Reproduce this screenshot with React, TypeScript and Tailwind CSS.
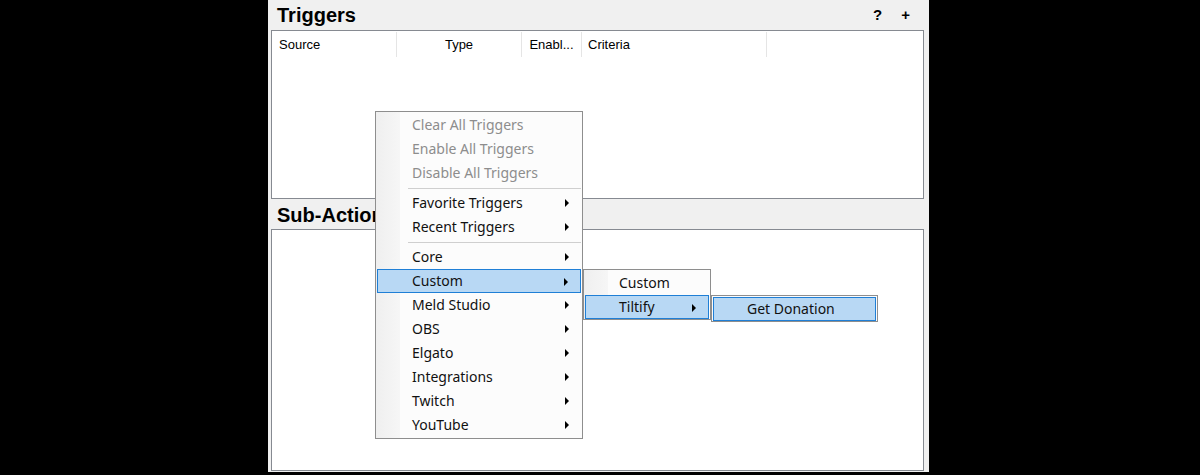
import type { ReactNode } from "react";

const UI = { fontFamily: '"Liberation Sans", Arial, sans-serif' };
const MENU = { fontFamily: '"Noto Sans", "Open Sans", sans-serif' };

function Arrow() {
  return (
    <svg width="5" height="8" viewBox="0 0 5 8" className="absolute right-[11px] top-[8px]">
      <path d="M0 0 L4 4 L0 8 Z" fill="#000" />
    </svg>
  );
}

function Item({
  label,
  disabled,
  sub,
  active,
  tight,
}: {
  label: string;
  disabled?: boolean;
  sub?: boolean;
  active?: boolean;
  tight?: boolean;
}) {
  const pad = active
    ? tight
      ? "border border-[#1f7fd6] bg-[#b8d8f4] pl-[33px]"
      : "border border-[#1f7fd6] bg-[#b8d8f4] pl-[34px]"
    : tight
      ? "pl-[34px]"
      : "pl-[35px]";
  return (
    <div
      className={`relative mx-[1px] flex h-[24px] items-center pb-[2px] text-[14px] ${pad} ${
        disabled ? "text-[#8d8d8d]" : "text-[#111]"
      }`}
    >
      {label}
      {sub && <Arrow />}
    </div>
  );
}

function Sep() {
  return (
    <div className="flex h-[6px] items-center pl-[32px] pr-[1px]">
      <div className="h-px w-full bg-[#cfcfcf]" />
    </div>
  );
}

function Menu({
  className,
  children,
  gutter = true,
}: {
  className: string;
  children: ReactNode;
  gutter?: boolean;
}) {
  return (
    <div
      className={`absolute border border-[#8e8e8e] bg-[#fcfcfc] py-[1px] ${className}`}
      style={MENU}
    >
      {gutter && (
        <div className="absolute bottom-0 left-0 top-0 w-[24px] bg-gradient-to-r from-[#efefef] to-[#f6f6f6]" />
      )}
      <div className="relative">{children}</div>
    </div>
  );
}

export default function App() {
  return (
    <div className="relative h-[475px] w-[1200px] overflow-hidden bg-black" style={UI}>
      <div className="ml-[268px] flex h-[472px] w-[661px] flex-col bg-[#f0f0f0]">
        <div className="flex h-[30px] shrink-0 items-center justify-between pl-[9px] pr-[19px]">
          <span className="text-[20px] font-bold leading-none text-black">Triggers</span>
          <div className="flex gap-[19px] text-[15px] font-bold text-black">
            <span>?</span>
            <span>+</span>
          </div>
        </div>
        <div className="ml-[3px] h-[169px] w-[653px] shrink-0 border border-[#868a91] bg-white">
          <div className="flex h-[26px] pt-[1px] text-[13px] text-black">
            <div className="flex w-[125px] items-center border-r border-[#e5e5e5] pl-[7px]">Source</div>
            <div className="flex w-[125px] items-center justify-center border-r border-[#e5e5e5]">Type</div>
            <div className="flex w-[60px] items-center justify-center border-r border-[#e5e5e5]">Enabl...</div>
            <div className="flex w-[185px] items-center border-r border-[#e5e5e5] pl-[6px]">Criteria</div>
          </div>
        </div>
        <div className="flex h-[30px] shrink-0 items-center pl-[9px] pt-[1px]">
          <span className="text-[20px] font-bold leading-none text-black">Sub-Actions</span>
        </div>
        <div className="mb-[1px] ml-[3px] w-[653px] flex-1 border border-[#868a91] bg-white" />
      </div>

      <Menu className="left-[375px] top-[111px] w-[208px] pt-[1px]">
        <Item label="Clear All Triggers" disabled />
        <Item label="Enable All Triggers" disabled />
        <Item label="Disable All Triggers" disabled />
        <Sep />
        <Item label="Favorite Triggers" sub />
        <Item label="Recent Triggers" sub />
        <Sep />
        <Item label="Core" sub />
        <Item label="Custom" sub active />
        <Item label="Meld Studio" sub />
        <Item label="OBS" sub />
        <Item label="Elgato" sub />
        <Item label="Integrations" sub />
        <Item label="Twitch" sub />
        <Item label="YouTube" sub />
      </Menu>

      <Menu className="left-[583px] top-[269px] w-[128px] pb-0">
        <Item label="Custom" tight />
        <Item label="Tiltify" sub active tight />
      </Menu>

      <Menu className="left-[711px] top-[295px] w-[167px] pb-0" gutter={false}>
        <Item label="Get Donation" active tight />
      </Menu>
    </div>
  );
}
